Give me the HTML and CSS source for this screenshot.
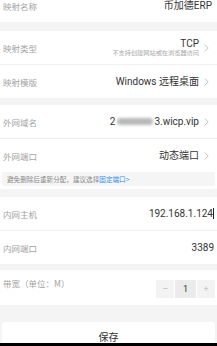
FILE: index.html
```html
<!DOCTYPE html>
<html lang="zh-CN">
<head>
<meta charset="utf-8">
<title>映射设置</title>
<link rel="stylesheet" href="styles.css">
</head>
<body>
<div class="page">
  <section class="group group-top">
    <div class="row">
      <span class="label">映射名称</span>
      <span class="value value-plain">币加德ERP</span>
    </div>
  </section>

  <section class="group group-type">
    <div class="row sep">
      <span class="label">映射类型</span>
      <span class="value-wrap">
        <span class="stack">
          <span class="value">TCP</span>
          <span class="note">不支持创建网站或在浏览器访问</span>
        </span>
        <svg class="chev" viewBox="0 0 5 8" width="5" height="8"><polyline points="0.6,0.6 4.2,4 0.6,7.4" fill="none" stroke="#bdbdbd" stroke-width="0.9"/></svg>
      </span>
    </div>
    <div class="row">
      <span class="label">映射模版</span>
      <span class="value-wrap">
        <span class="value">Windows 远程桌面</span>
        <svg class="chev" viewBox="0 0 5 8" width="5" height="8"><polyline points="0.6,0.6 4.2,4 0.6,7.4" fill="none" stroke="#bdbdbd" stroke-width="0.9"/></svg>
      </span>
    </div>
  </section>

  <section class="group group-net">
    <div class="row sep">
      <span class="label">外网域名</span>
      <span class="value-wrap">
        <span class="value">2<span class="blur"></span>3.wicp.vip</span>
        <svg class="chev" viewBox="0 0 5 8" width="5" height="8"><polyline points="0.6,0.6 4.2,4 0.6,7.4" fill="none" stroke="#bdbdbd" stroke-width="0.9"/></svg>
      </span>
    </div>
    <div class="row">
      <span class="label">外网端口</span>
      <span class="value-wrap">
        <span class="value">动态端口</span>
        <svg class="chev" viewBox="0 0 5 8" width="5" height="8"><polyline points="0.6,0.6 4.2,4 0.6,7.4" fill="none" stroke="#bdbdbd" stroke-width="0.9"/></svg>
      </span>
    </div>
    <div class="notice-wrap">
      <div class="notice">避免删除后重新分配，建议选择<span class="link">固定端口&gt;</span></div>
    </div>
  </section>

  <section class="group group-host">
    <div class="row sep">
      <span class="label">内网主机</span>
      <span class="value value-input">192.168.1.124<span class="cursor"></span></span>
    </div>
    <div class="row">
      <span class="label">内网端口</span>
      <span class="value value-input">3389</span>
    </div>
  </section>

  <section class="group group-band">
    <div class="row row-band">
      <span class="label label-top">带宽（单位：M）</span>
      <div class="stepper">
        <span class="step-btn">−</span>
        <span class="step-val">1</span>
        <span class="step-btn">+</span>
      </div>
    </div>
  </section>

  <div class="save-wrap">
    <button class="save" type="button">保存</button>
  </div>
</div>
<div class="navbar"></div>
</body>
</html>
```

FILE: styles.css
```css
html, body {
  margin: 0;
  padding: 0;
  background: #f4f4f4;
}
body {
  font-family: Roboto, "Noto Sans CJK SC", sans-serif;
  color: #333;
  overflow: hidden;
  height: 346px;
}
.page {
  display: flex;
  flex-direction: column;
}
.group {
  background: #fff;
  display: flex;
  flex-direction: column;
}
.group-top { margin-top: -11px; }
.group-type { margin-top: 9px; }
.group-net { margin-top: 7px; }
.group-host { margin-top: 8px; }
.group-band { margin-top: 6px; }

.row {
  height: 33px;
  display: flex;
  align-items: center;
  justify-content: space-between;
  padding: 0 8px 0 3px;
}
.row.sep {
  border-bottom: 1px solid #efefef;
}
.label {
  font-family: "Noto Sans CJK SC", sans-serif;
  font-size: 8.5px;
  line-height: 12px;
  color: #a3a3a3;
}
.value {
  font-size: 10px;
  line-height: 12px;
  color: #333;
  display: flex;
  align-items: center;
  white-space: nowrap;
}
.value-plain {
  margin-right: -3px;
}
.value-input {
  margin-right: -5px;
}
.value-wrap {
  display: flex;
  align-items: center;
}
.stack {
  display: flex;
  flex-direction: column;
  align-items: flex-end;
}
.stack .value {
  line-height: 11px;
}
.note {
  font-family: "Noto Sans CJK SC", sans-serif;
  font-size: 6.2px;
  line-height: 8px;
  color: #a8a8a8;
}
.chev {
  margin-left: 5px;
  display: block;
}
.blur {
  display: inline-block;
  width: 36px;
  height: 7px;
  margin: 0 1px 0 2px;
  background: #b8b8b8;
  border-radius: 4px;
  filter: blur(1.6px);
}
.cursor {
  display: inline-block;
  width: 1px;
  height: 11px;
  background: #222;
  margin-left: 0;
}

.notice-wrap {
  padding: 0 2px 3px;
}
.notice {
  background: #f5f5f5;
  border-radius: 2px;
  height: 14px;
  display: flex;
  align-items: center;
  padding-left: 5px;
  font-family: "Noto Sans CJK SC", sans-serif;
  font-size: 6.6px;
  color: #8a8a8a;
  white-space: nowrap;
}
.link {
  color: #2f8ff0;
}

.row-band {
  height: 35px;
  padding-right: 2px;
  align-items: center;
}
.label-top {
  align-self: flex-start;
  margin-top: 7px;
}
.stepper {
  display: flex;
  gap: 1px;
  height: 18px;
  margin-top: 2px;
}
.step-btn, .step-val {
  display: flex;
  align-items: center;
  justify-content: center;
  font-size: 9px;
}
.step-btn {
  width: 18px;
  background: #f3f3f3;
  color: #b5b5b5;
  font-family: "Noto Sans", sans-serif;
}
.step-val {
  width: 21px;
  background: #ebebeb;
  color: #333;
}

.save-wrap {
  margin-top: 17px;
  padding: 0 2px;
}
.save {
  width: 100%;
  height: 28px;
  border: none;
  border-radius: 3px;
  background: #fff;
  font-family: "Noto Sans CJK SC", sans-serif;
  font-size: 10px;
  color: #333;
  padding: 0;
}
.navbar {
  position: fixed;
  left: 0;
  right: 0;
  bottom: 0;
  height: 3px;
  background: #000;
}
```
